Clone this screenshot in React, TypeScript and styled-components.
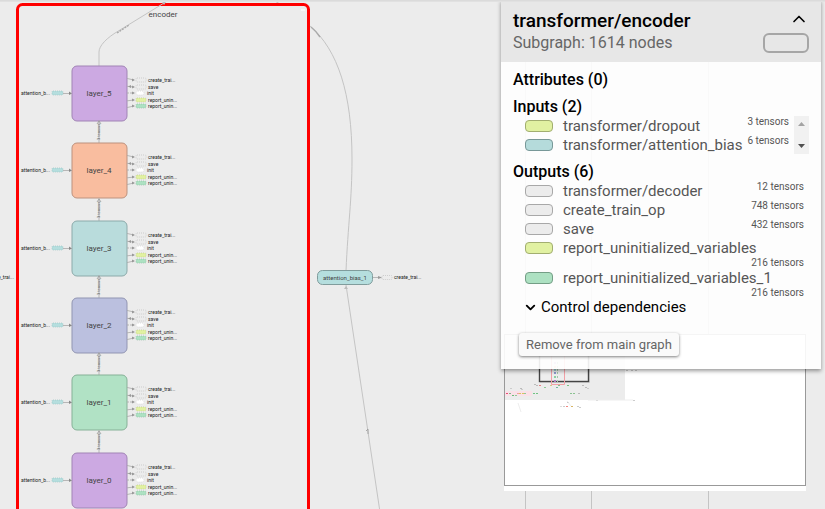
import React from "react";
import styled, { createGlobalStyle } from "styled-components";
import { ChevronDown, ChevronUp } from "lucide-react";

const GlobalStyle = createGlobalStyle`
  *, *::before, *::after { box-sizing: border-box; }
  body {
    margin: 0;
    background: #ececec;
    font-family: Roboto, "Liberation Sans", sans-serif;
    color: #000;
  }
`;

const Page = styled.main`
  position: relative;
  min-height: 100vh;
  overflow: hidden;
`;

const GraphCanvas = styled.svg`
  display: block;
  width: 100%;
  height: 100vh;
  font-family: Roboto, "Liberation Sans", sans-serif;
`;

const NodeLabel = styled.text<{ $size?: number }>`
  font-size: ${(p) => p.$size ?? 5}px;
  fill: ${(p) => (p.$size ? "#444" : "#222")};
`;

const Edge = styled.path`
  fill: none;
  stroke: #c4c4c4;
  stroke-width: 1;
`;

const SmallEdge = styled.path`
  fill: none;
  stroke: #aaa;
  stroke-width: 0.8;
`;

const ToolbarShadow = styled.div`
  position: absolute;
  inset: 0 0 auto;
  height: 2px;
  background: linear-gradient(#d8d8d8, #e4e4e4);
`;

const Minimap = styled.section`
  position: absolute;
  right: 19px;
  bottom: 18px;
  width: 302px;
  padding-bottom: 5px;
  background: #fff;
`;

const MinimapFrame = styled.div`
  height: 152px;
  border: 1px solid #999;
`;

const MinimapDrawing = styled.svg`
  display: block;
  width: 100%;
  height: 100%;
`;

const InfoPanel = styled.aside`
  position: absolute;
  top: 0;
  right: 4px;
  width: 320px;
  background: rgba(255, 255, 255, 0.9);
  box-shadow: 0 2px 4px rgba(0, 0, 0, 0.4);
`;

const PanelHeader = styled.header`
  display: flex;
  justify-content: space-between;
  height: 62px;
  padding: 9px 12px 0;
  background: #e7e7e7;
`;

const Title = styled.h1`
  margin: 0;
  font-size: 19px;
  font-weight: 500;
  line-height: 23px;
`;

const Subtitle = styled.p`
  margin: 0;
  color: #666;
  font-size: 16px;
  line-height: 21px;
`;

const HeaderSide = styled.div`
  display: flex;
  flex-direction: column;
  align-items: flex-end;
  gap: 4px;
`;

const IconButton = styled.button`
  display: flex;
  padding: 0;
  border: 0;
  background: none;
  color: #000;
`;

const SubgraphShape = styled.span`
  width: 46px;
  height: 20px;
  border: 2px solid #a6a6a6;
  border-radius: 6px;
`;

const PanelBody = styled.div`
  padding: 8px 12px 13px;
`;

const Heading = styled.h2`
  margin: 0;
  font-size: 16px;
  font-weight: 500;
  line-height: 19px;
`;

const Section = styled.section`
  margin-bottom: 8px;
`;

const ListArea = styled.div`
  display: flex;
`;

const List = styled.ul`
  flex: 1;
  min-width: 0;
  margin: 0;
  padding: 0 5px 0 12px;
  list-style: none;
`;

const Item = styled.li`
  display: flex;
  flex-wrap: wrap;
  align-items: flex-start;
`;

const Swatch = styled.span<{ $fill: string; $line: string }>`
  width: 28px;
  height: 12px;
  margin: 4px 10px 0 0;
  border: 1px solid ${(p) => p.$line};
  border-radius: 4px;
  background: ${(p) => p.$fill};
`;

const NodeLink = styled.a`
  height: 19px;
  color: #565656;
  font-size: 15px;
  line-height: 21px;
  text-decoration: none;
`;

const Tensors = styled.span`
  margin-left: auto;
  color: #565656;
  font-size: 10px;
  line-height: 11px;
`;

const ScrollTrack = styled.div`
  display: flex;
  flex-direction: column;
  justify-content: space-between;
  width: 15px;
  background: #f1f1f1;
`;

const ScrollButton = styled.button`
  display: block;
  height: 15px;
  padding: 0;
  border: 0;
  background: none;
`;

const Toggle = styled.button`
  display: flex;
  align-items: center;
  gap: 3px;
  margin: 0;
  padding: 0 0 0 10px;
  border: 0;
  background: none;
  color: #000;
  font: 400 15px/19px Roboto, "Liberation Sans", sans-serif;
`;

const RemoveButton = styled.button`
  display: block;
  margin: 16px 0 0 6px;
  padding: 0 7px;
  border: 0;
  border-radius: 3px;
  background: #fafafa;
  box-shadow: 0 1px 3px rgba(0, 0, 0, 0.5);
  color: #666;
  font: 400 13px/23px Roboto, "Liberation Sans", sans-serif;
`;

const LAYERS = [
  { name: "layer_5", y: 93, fill: "#cca9e2", line: "#a184b5" },
  { name: "layer_4", y: 170, fill: "#f9bd9f", line: "#bd927e" },
  { name: "layer_3", y: 248, fill: "#b9dcdc", line: "#8caaaa" },
  { name: "layer_2", y: 325, fill: "#bbc0df", line: "#9195b2" },
  { name: "layer_1", y: 402, fill: "#b1e2c5", line: "#86b197" },
  { name: "layer_0", y: 480, fill: "#cca9e2", line: "#a184b5" },
];

const ANNOTATIONS = [
  { label: "create_trai...", dy: -13, fill: "#ececec", line: "#bbb" },
  { label: "save", dy: -6, fill: "#ececec", line: "#bbb", both: true },
  { label: "init", dy: 0, fill: "#fff", line: "#ccc", round: true },
  { label: "report_unin...", dy: 7, fill: "#e1f1a2", line: "#b9c684" },
  { label: "report_unin...", dy: 13, fill: "#ade1c2", line: "#86b99a" },
];

function Layer({ name, y, fill, line, first }: (typeof LAYERS)[number] & { first: boolean }) {
  return (
    <g transform={`translate(0 ${y})`}>
      {!first && (
        <>
          <SmallEdge d="M99-27V-50" />
          <path d="M97-46 99-49 101-46" fill="none" stroke="#999" strokeWidth=".8" />
          <NodeLabel $size={4} transform="translate(100 -30) rotate(-90)" opacity=".8">3 tensors</NodeLabel>
        </>
      )}
      <rect x="72" y="-27" width="55" height="55" rx="5" fill={fill} stroke={line} />
      <NodeLabel x="99" y="3" textAnchor="middle" $size={8}>{name}</NodeLabel>
      <NodeLabel x="50" y="2" textAnchor="end">attention_b...</NodeLabel>
      <rect x="52" y="-2" width="11" height="4" rx="1" fill="#b5dede" stroke="#93bfc0" strokeWidth=".6" strokeDasharray="1 1" />
      <SmallEdge d="M63 .5H70" />
      <path d="M69-1.5 72 .5 69 2Z" fill="#888" />
      {ANNOTATIONS.map((a) => (
        <g key={a.dy}>
          <SmallEdge
            d={`M127 ${a.dy * 1.12}L134 ${a.dy}`}
            strokeDasharray={a.round ? "2 1" : undefined}
          />
          <path d={`M132 ${a.dy - 1.5}l3 1.5-3 1.5Z`} fill="#999" />
          {a.both && <path d={`M131 ${a.dy - 2}l-3 1.5 3 1.5Z`} fill="#999" />}
          <rect
            x="136"
            y={a.dy - 2}
            width={a.round ? 8 : 10}
            height="4"
            rx={a.round ? 2 : 1}
            fill={a.fill}
            stroke={a.line}
            strokeWidth=".6"
            strokeDasharray="1 1"
          />
          <NodeLabel x={a.round ? 147 : 148} y={a.dy + 2}>{a.label}</NodeLabel>
        </g>
      ))}
    </g>
  );
}

function Graph() {
  return (
    <GraphCanvas role="img" aria-label="Computation graph">
      {[525, 591, 708].map((x) => (
        <Edge key={x} d={`M${x}.5 0V2000`} />
      ))}
      <Edge d="M273 0 280 4M310 26C338 50 352 94 352 159C352 200 348 224 346 271M346 285 380 512L550 2000" />
      <path d="M311 27Q316 31 320 37" stroke="#aaa" strokeWidth="1.4" fill="none" />
      <rect x="17.5" y="4.5" width="291" height="2000" rx="5" fill="#ececec" stroke="#f00" strokeWidth="3" />
      <rect x="301" y="9" width="4" height="2" fill="#f7f7f7" />
      <Edge d="M99 66V52C99 46 106 38 120 30L164 3" />
      <path d="M117 33 129 25" stroke="#aaa" strokeWidth="1.4" strokeDasharray="2 1" />
      <path d="M161 0 164 5 166 2Z" fill="#bbb" />
      <NodeLabel x="163" y="17" textAnchor="middle" $size={8}>encoder</NodeLabel>
      {LAYERS.map((layer, i) => <Layer key={layer.name} first={i === 0} {...layer} />)}
      <NodeLabel x="14" y="279" textAnchor="end">create_trai...</NodeLabel>
      <rect x="317.5" y="270.5" width="55" height="14" rx="5" fill="#b5dede" stroke="#809c9c" />
      <NodeLabel x="345" y="280" textAnchor="middle" $size={6}>attention_bias_1</NodeLabel>
      <path d="M344 289 346 286 348 289Z" fill="#bbb" />
      <SmallEdge d="M373 277.5H379" />
      <path d="M378 276 382 277.5 378 279Z" fill="#999" />
      <rect x="382" y="275.5" width="10" height="4" rx="1" fill="none" stroke="#bbb" strokeWidth=".6" strokeDasharray="1 1" />
      <NodeLabel x="394" y="279">create_trai...</NodeLabel>
      <path d="M366 431 368 429V434" fill="none" stroke="#999" strokeWidth=".8" />
    </GraphCanvas>
  );
}

const MARKS: [number, number, string][] = [
  [34, 50, "#e88282"], [39, 52, "#8acb95"], [53, 50, "#7bc085"], [62, 50, "#7bc085"],
  [51, 52, "#6fb79e"], [29, 49, "#bbb"], [31, 50, "#bbb"], [45, 50, "#d8c583"],
  [15, 53, "#bbb"], [16, 54, "#ccc"], [5, 53, "#ccc"], [77, 50, "#bbb"], [80, 52, "#bbb"], [82, 53, "#ccc"],
  [1, 58, "#e94d76"], [4, 58, "#7dba89"], [12, 58, "#efa0a0"], [14, 58, "#dbc35e"], [17, 58, "#dbc35e"],
  [19, 58, "#8dca99"], [7, 60, "#6dba79"], [10, 60, "#8dca99"],
  [28, 58, "#71c383"], [31, 58, "#71c383"], [65, 58, "#8ac290"], [68, 58, "#8ac290"],
  [73, 58, "#bbb"], [62, 67, "#bbb"], [61, 71, "#f18780"], [66, 71, "#d8b563"],
  [58, 71, "#ccc"], [72, 71, "#ccc"], [74, 72, "#ccc"], [55, 71, "#ddd"], [121, 35, "#ccc"], [126, 35, "#ccc"],
  [130, 35, "#ccc"], [128, 65, "#ccc"], [91, 65, "#ccc"],
];

function GraphMinimap() {
  return (
    <Minimap aria-label="Graph overview">
      <MinimapFrame>
        <MinimapDrawing aria-hidden="true">
          <rect y="0" width="120" height="65" fill="#ececec" />
          <rect y="56" width="27" height="5" fill="#fae1e8" />
          <rect x="35" y="14" width="50" height="34" fill="#ccc" opacity=".6" />
          <rect x="34.5" y="12.5" width="49" height="34" fill="#eee" stroke="#444" strokeWidth="1.4" />
          <path d="M46.5 20V49.5H59.5V20" fill="none" stroke="#f2a0a6" />
          {[27, 31, 34, 37, 41, 45].map((y, i) => (
            <g key={y}>
              <rect x="49" y={y} width="2" height="2" fill={["#c7a3dc", "#f3b294", "#a0cfd0", "#8d99cb", "#8ad0a4", "#aa7cc5"][i]} />
              <rect x="52" y={y} width="1" height="2" fill="#a2c7a7" />
            </g>
          ))}
          {MARKS.map(([x, y, color]) => (
            <rect key={`${x}-${y}`} x={x} y={y} width="2" height="1" fill={color} />
          ))}
          <path d="M13 68 16 77M62 66 66 71M83 65 128 65" stroke="#eee" fill="none" />
        </MinimapDrawing>
      </MinimapFrame>
    </Minimap>
  );
}

const LIME = { fill: "#e1f1a2", line: "#a2ae70" };
const TEAL = { fill: "#b5dbdb", line: "#789898" };
const GRAY = { fill: "#ececec", line: "#a8a8a8" };
const GREEN = { fill: "#ade1c2", line: "#749e86" };

const INPUTS = [
  { name: "transformer/dropout", tensors: 3, tone: LIME },
  { name: "transformer/attention_bias", tensors: 6, tone: TEAL },
];

const OUTPUTS = [
  { name: "transformer/decoder", tensors: 12, tone: GRAY },
  { name: "create_train_op", tensors: 748, tone: GRAY },
  { name: "save", tensors: 432, tone: GRAY },
  { name: "report_uninitialized_variables", tensors: 216, tone: LIME },
  { name: "report_uninitialized_variables_1", tensors: 216, tone: GREEN },
];

function NodeList({ nodes }: { nodes: typeof INPUTS }) {
  return (
    <List>
      {nodes.map((n) => (
        <Item key={n.name}>
          <Swatch $fill={n.tone.fill} $line={n.tone.line} />
          <NodeLink href="#">{n.name}</NodeLink>
          <Tensors>{n.tensors} tensors</Tensors>
        </Item>
      ))}
    </List>
  );
}

export default function App() {
  return (
    <Page>
      <GlobalStyle />
      <Graph />
      <GraphMinimap />
      <InfoPanel>
        <PanelHeader>
          <div>
            <Title>transformer/encoder</Title>
            <Subtitle>Subgraph: 1614 nodes</Subtitle>
          </div>
          <HeaderSide>
            <IconButton aria-label="Collapse details"><ChevronUp size={20} strokeWidth={2} /></IconButton>
            <SubgraphShape />
          </HeaderSide>
        </PanelHeader>
        <PanelBody>
          <Section><Heading>Attributes (0)</Heading></Section>
          <Section>
            <Heading>Inputs (2)</Heading>
            <ListArea>
              <NodeList nodes={INPUTS} />
              <ScrollTrack>
                <ScrollButton aria-label="Scroll up"><svg width="15" height="15"><path d="M4 10 7.5 6 11 10Z" fill="#a3a3a3" /></svg></ScrollButton>
                <ScrollButton aria-label="Scroll down"><svg width="15" height="15"><path d="M4 5 7.5 9 11 5Z" fill="#505050" /></svg></ScrollButton>
              </ScrollTrack>
            </ListArea>
          </Section>
          <Heading>Outputs (6)</Heading>
          <NodeList nodes={OUTPUTS} />
          <Toggle aria-expanded="false"><ChevronDown size={15} strokeWidth={3} />Control dependencies</Toggle>
          <RemoveButton>Remove from main graph</RemoveButton>
        </PanelBody>
      </InfoPanel>
      <ToolbarShadow />
    </Page>
  );
}
